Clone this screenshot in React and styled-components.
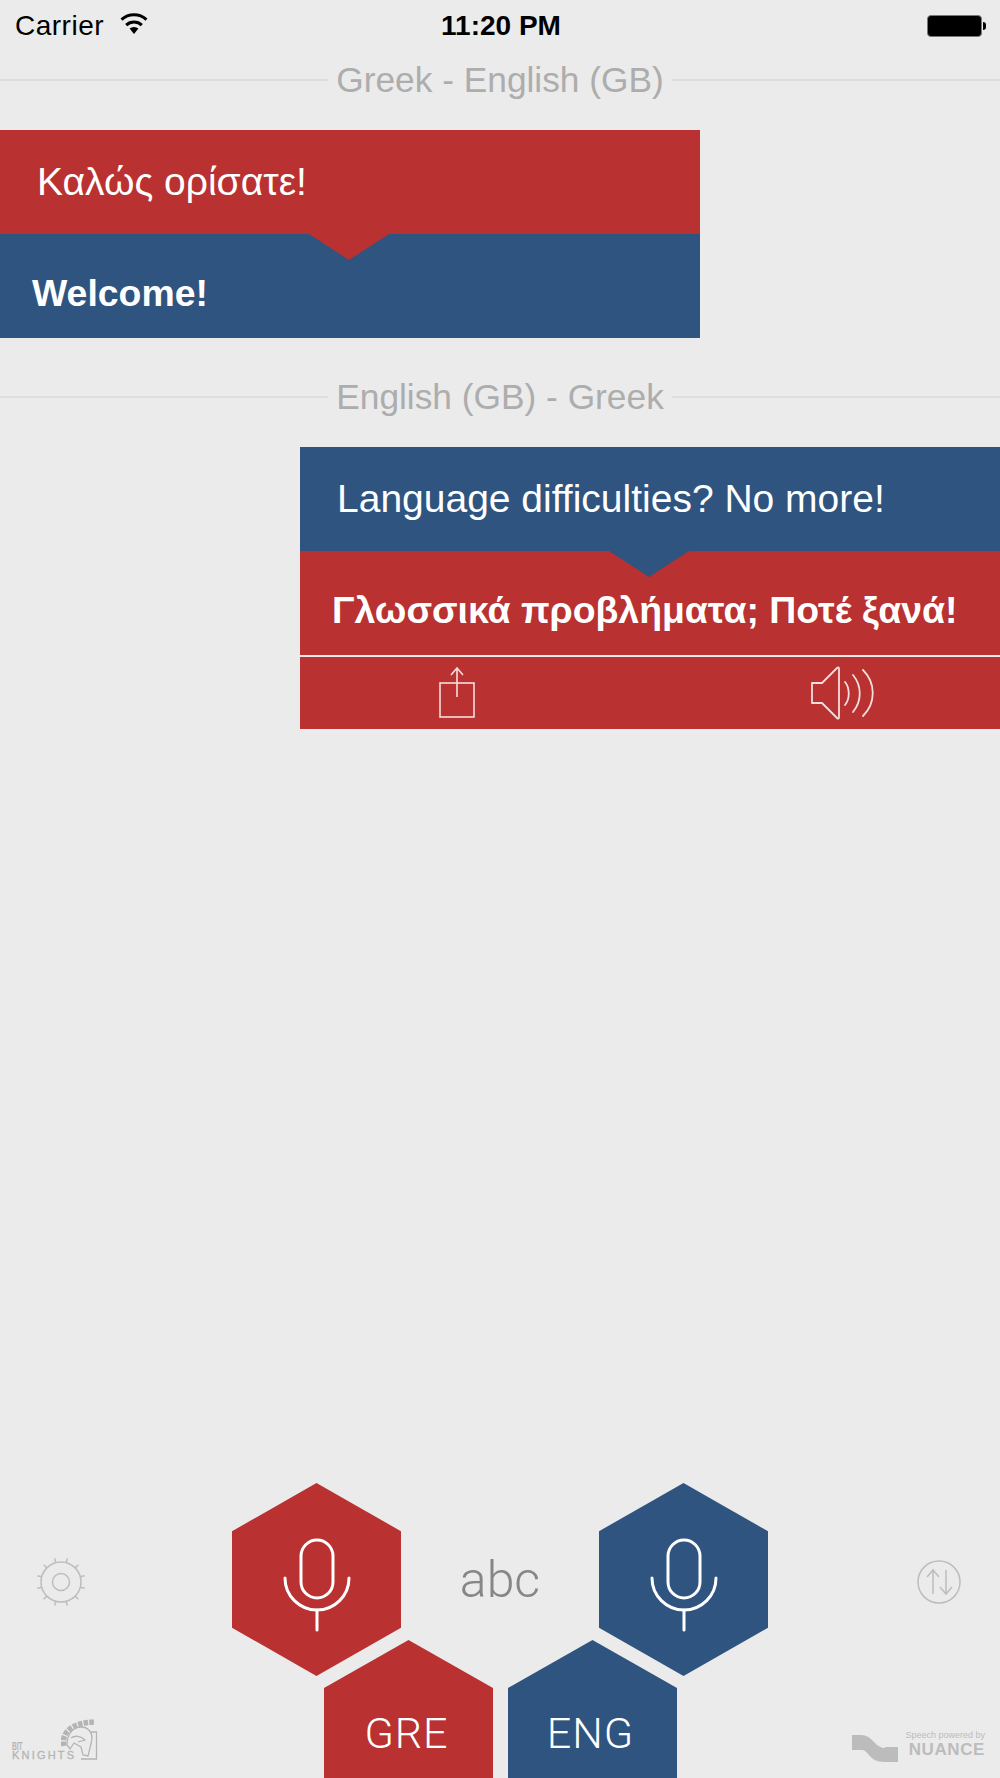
import React from "react";
import styled, { createGlobalStyle } from "styled-components";

const RED = "#b93130";
const BLUE = "#2f547f";
const SANS = '"Liberation Sans", Arial, sans-serif';

const GlobalStyle = createGlobalStyle`
  html, body {
    margin: 0;
    background: #ebebeb;
  }
  * {
    box-sizing: border-box;
  }
`;

const GearIcon = () => (
  <svg width="52" height="52" viewBox="0 0 52 52" fill="none" stroke="#bdbdbd" strokeWidth="1.5">
    <circle cx="26" cy="26" r="20" />
    <circle cx="26" cy="26" r="8.5" />
    {Array.from({ length: 12 }).map((_, i) => (
      <line key={i} x1="26" y1="6" x2="26" y2="1.5" transform={`rotate(${15 + i * 30} 26 26)`} />
    ))}
  </svg>
);

const SwapIcon = () => (
  <svg width="44" height="44" viewBox="0 0 44 44" fill="none" stroke="#bdbdbd" strokeWidth="1.5">
    <circle cx="22" cy="22" r="21" />
    <path d="M16 34V10M10 17l6-7 6 7" />
    <path d="M29 10v24M23 27l6 7 6-7" />
  </svg>
);

const MicIcon = () => (
  <svg width="70" height="94" viewBox="0 0 70 94" fill="none" stroke="#fff" strokeWidth="3" strokeLinecap="round">
    <rect x="19" y="2" width="32" height="58" rx="16" />
    <path d="M3 40a32 32 0 0 0 64 0" />
    <line x1="35" y1="72" x2="35" y2="92" />
  </svg>
);

const ShareIcon = () => (
  <svg width="36" height="52" viewBox="0 0 36 52" fill="none" stroke="#f4dedd" strokeWidth="1.6">
    <rect x="1" y="16" width="34" height="34" />
    <path d="M18 1v29M12 8l6-7 6 7" />
  </svg>
);

const SpeakerIcon = () => (
  <svg width="64" height="54" viewBox="0 0 64 54" fill="none" stroke="#f4dedd" strokeWidth="1.8" strokeLinejoin="round" strokeLinecap="round">
    <path d="M1 17h10L26 2c1-1 2-1 2 1v48c0 2-1 2-2 1L11 37H1z" />
    <path d="M34 16c5 6 5 17 0 23" />
    <path d="M42 9c9 11 9 26 0 37" />
    <path d="M52 4c13 13 13 33 0 46" />
  </svg>
);

const WifiIcon = () => (
  <svg width="28" height="21" viewBox="0 0 28 21">
    <path d="M14 21l-4.4-5.4a6.6 6.6 0 0 1 8.8 0z" fill="#000" />
    <g fill="none" stroke="#000" strokeWidth="3">
      <path d="M6.2 12.2a11.4 11.4 0 0 1 15.6 0" />
      <path d="M1.5 6.6a18.8 18.8 0 0 1 25 0" />
    </g>
  </svg>
);

const KnightHelmet = () => (
  <svg width="37" height="42" viewBox="0 0 37 42" fill="none" stroke="#b4b4b4" strokeWidth="1.3">
    <path d="M3 28C0 15 10 5 33 4" strokeWidth="5.5" strokeDasharray="4.5 1.2" />
    <path d="M6 27C6 16 12 9 20 9c7 0 11 5 11 11l-1 6-3 12-5-1-2-8-7-4-4 6z" />
    <path d="M10 20c4-3 10-2 14 2l-7 2" />
    <path d="M30 14h5.5v27H20" />
  </svg>
);

const NuanceMark = () => (
  <svg width="46" height="27" viewBox="0 0 46 27">
    <path
      d="M0 0h9c6 0 9 3 13 7 4 4 7 6 11 6v-1h13v15H33c-9 0-13-3-17-8-3-4-5-4-7-4H0z"
      fill="#bcbcbc"
    />
  </svg>
);

const BubbleBlock = ({ side, colors, top, bottom, actions }) => (
  <Bubble $side={side}>
    <BubbleTop $color={colors[0]}>
      <TopText>{top}</TopText>
    </BubbleTop>
    <BubbleBottom $color={colors[1]}>
      <BottomText>{bottom}</BottomText>
    </BubbleBottom>
    {actions && (
      <Actions $color={colors[1]}>
        <ShareIcon />
        <SpeakerIcon />
      </Actions>
    )}
  </Bubble>
);

export default function App() {
  return (
    <Page>
      <GlobalStyle />
      <StatusBar>
        <Carrier>
          Carrier
          <WifiIcon />
        </Carrier>
        <Clock>11:20 PM</Clock>
        <Battery />
      </StatusBar>

      <Conversation>
        <Section>
          <Divider>
            <span>Greek - English (GB)</span>
          </Divider>
          <BubbleBlock side="left" colors={[RED, BLUE]} top="Καλώς ορίσατε!" bottom="Welcome!" />
        </Section>
        <Section>
          <Divider>
            <span>English (GB) - Greek</span>
          </Divider>
          <BubbleBlock
            side="right"
            colors={[BLUE, RED]}
            top="Language difficulties? No more!"
            bottom="Γλωσσικά προβλήματα; Ποτέ ξανά!"
            actions
          />
        </Section>
      </Conversation>

      <Dock>
        <MicRow>
          <SideIcon $side="left">
            <GearIcon />
          </SideIcon>
          <MicHex $color={RED}>
            <MicIcon />
          </MicHex>
          <Abc>abc</Abc>
          <MicHex $color={BLUE}>
            <MicIcon />
          </MicHex>
          <SideIcon $side="right">
            <SwapIcon />
          </SideIcon>
        </MicRow>
        <LangRow>
          <KnightsLogo>
            <KnightsText>
              <small>BIT</small>
              <b>KNIGHTS</b>
            </KnightsText>
            <KnightHelmet />
          </KnightsLogo>
          <LangPair>
            <LangHex $color={RED}>GRE</LangHex>
            <LangHex $color={BLUE}>ENG</LangHex>
          </LangPair>
          <NuanceLogo>
            <NuanceMark />
            <NuanceText>
              <small>Speech powered by</small>
              <b>NUANCE</b>
            </NuanceText>
          </NuanceLogo>
        </LangRow>
      </Dock>
    </Page>
  );
}

const Page = styled.div`
  width: 1000px;
  height: 1778px;
  display: flex;
  flex-direction: column;
  overflow: hidden;
  background: #ebebeb;
  font-family: ${SANS};
`;

const StatusBar = styled.div`
  height: 40px;
  padding: 10px 13px 0 15px;
  display: grid;
  grid-template-columns: 1fr auto 1fr;
  align-items: center;
  color: #000;
  font-size: 28px;
`;

const Carrier = styled.div`
  display: flex;
  align-items: center;
  gap: 16px;
  letter-spacing: 0.5px;
  svg {
    margin-top: -6px;
  }
`;

const Clock = styled.div`
  font-weight: 700;
  font-size: 28px;
`;

const Battery = styled.div`
  justify-self: end;
  position: relative;
  width: 55px;
  height: 22px;
  margin-right: 5px;
  background: #000;
  border: 1px solid #777;
  border-radius: 4px;
  &::after {
    content: "";
    position: absolute;
    right: -5px;
    top: 6px;
    width: 3px;
    height: 8px;
    background: #000;
    border-radius: 0 3px 3px 0;
  }
`;

const Conversation = styled.div`
  margin-top: 20px;
  display: flex;
  flex-direction: column;
  gap: 39px;
`;

const Section = styled.section`
  display: flex;
  flex-direction: column;
`;

const Divider = styled.div`
  height: 40px;
  margin-bottom: 30px;
  display: flex;
  align-items: center;
  gap: 8px;
  color: #adadad;
  font-size: 35.3px;
  &::before,
  &::after {
    content: "";
    flex: 1;
    height: 2px;
    background: #dedede;
  }
`;

const Bubble = styled.div`
  width: 700px;
  align-self: ${(p) => (p.$side === "left" ? "flex-start" : "flex-end")};
  color: #fff;
`;

const BubbleTop = styled.div`
  position: relative;
  height: 104px;
  padding-left: 37px;
  display: flex;
  align-items: center;
  background: ${(p) => p.$color};
  &::after {
    content: "";
    position: absolute;
    left: 309px;
    top: 100%;
    width: 80px;
    height: 26px;
    background: ${(p) => p.$color};
    clip-path: polygon(0 0, 100% 0, 50% 100%);
  }
`;

const BubbleBottom = styled.div`
  height: 104px;
  padding: 14px 0 0 32px;
  display: flex;
  align-items: center;
  background: ${(p) => p.$color};
`;

const TopText = styled.span`
  font-size: 39px;
`;

const BottomText = styled.span`
  font-size: 37.4px;
  font-weight: 700;
`;

const Actions = styled.div`
  height: 72px;
  margin-top: 2px;
  padding: 0 125px 0 139px;
  display: flex;
  align-items: center;
  justify-content: space-between;
  background: ${(p) => p.$color};
`;

const Dock = styled.div`
  margin-top: auto;
  display: flex;
  flex-direction: column;
`;

const MicRow = styled.div`
  display: grid;
  grid-template-columns: 232px 169px 198px 169px 232px;
  align-items: center;
`;

const SideIcon = styled.div`
  display: flex;
  justify-content: ${(p) => (p.$side === "left" ? "flex-start" : "flex-end")};
  margin: ${(p) => (p.$side === "left" ? "4px 0 0 35px" : "4px 39px 0 0")};
`;

const MicHex = styled.div`
  height: 193px;
  padding-top: 10px;
  display: flex;
  align-items: center;
  justify-content: center;
  background: ${(p) => p.$color};
  clip-path: polygon(50% 0, 100% 25%, 100% 75%, 50% 100%, 0 75%, 0 25%);
`;

const Abc = styled.div`
  text-align: center;
  color: #868686;
  font-family: Roboto, ${SANS};
  font-weight: 300;
  font-size: 50px;
`;

const LangRow = styled.div`
  margin-top: -36px;
  height: 138px;
  display: grid;
  grid-template-columns: 324px auto 1fr;
`;

const LangPair = styled.div`
  display: flex;
  gap: 15px;
`;

const LangHex = styled.div`
  width: 169px;
  padding: 70px 4px 0 0;
  text-align: center;
  color: #fff;
  font-family: Roboto, ${SANS};
  font-weight: 300;
  font-size: 43px;
  letter-spacing: 1px;
  line-height: 46px;
  background: ${(p) => p.$color};
  clip-path: polygon(50% 0, 100% 48px, 100% 100%, 0 100%, 0 48px);
`;

const KnightsLogo = styled.div`
  align-self: end;
  margin: 0 0 18px 12px;
  display: flex;
  align-items: flex-end;
  color: #b4b4b4;
  svg {
    margin-left: -15px;
  }
`;

const KnightsText = styled.div`
  display: flex;
  flex-direction: column;
  line-height: 9px;
  small {
    font-size: 11px;
    font-weight: 700;
    transform: scaleX(0.6);
    transform-origin: left;
  }
  b {
    font-size: 11px;
    font-weight: 400;
    letter-spacing: 2.2px;
    -webkit-text-stroke: 0.3px #b4b4b4;
  }
`;

const NuanceLogo = styled.div`
  align-self: end;
  justify-self: end;
  margin: 0 15px 16px 0;
  display: flex;
  align-items: flex-end;
  gap: 7px;
  color: #bcbcbc;
`;

const NuanceText = styled.div`
  padding-bottom: 5px;
  display: flex;
  flex-direction: column;
  align-items: flex-end;
  small {
    font-size: 9px;
    line-height: 14px;
  }
  b {
    font-size: 17px;
    line-height: 15px;
    letter-spacing: 0.6px;
  }
`;
